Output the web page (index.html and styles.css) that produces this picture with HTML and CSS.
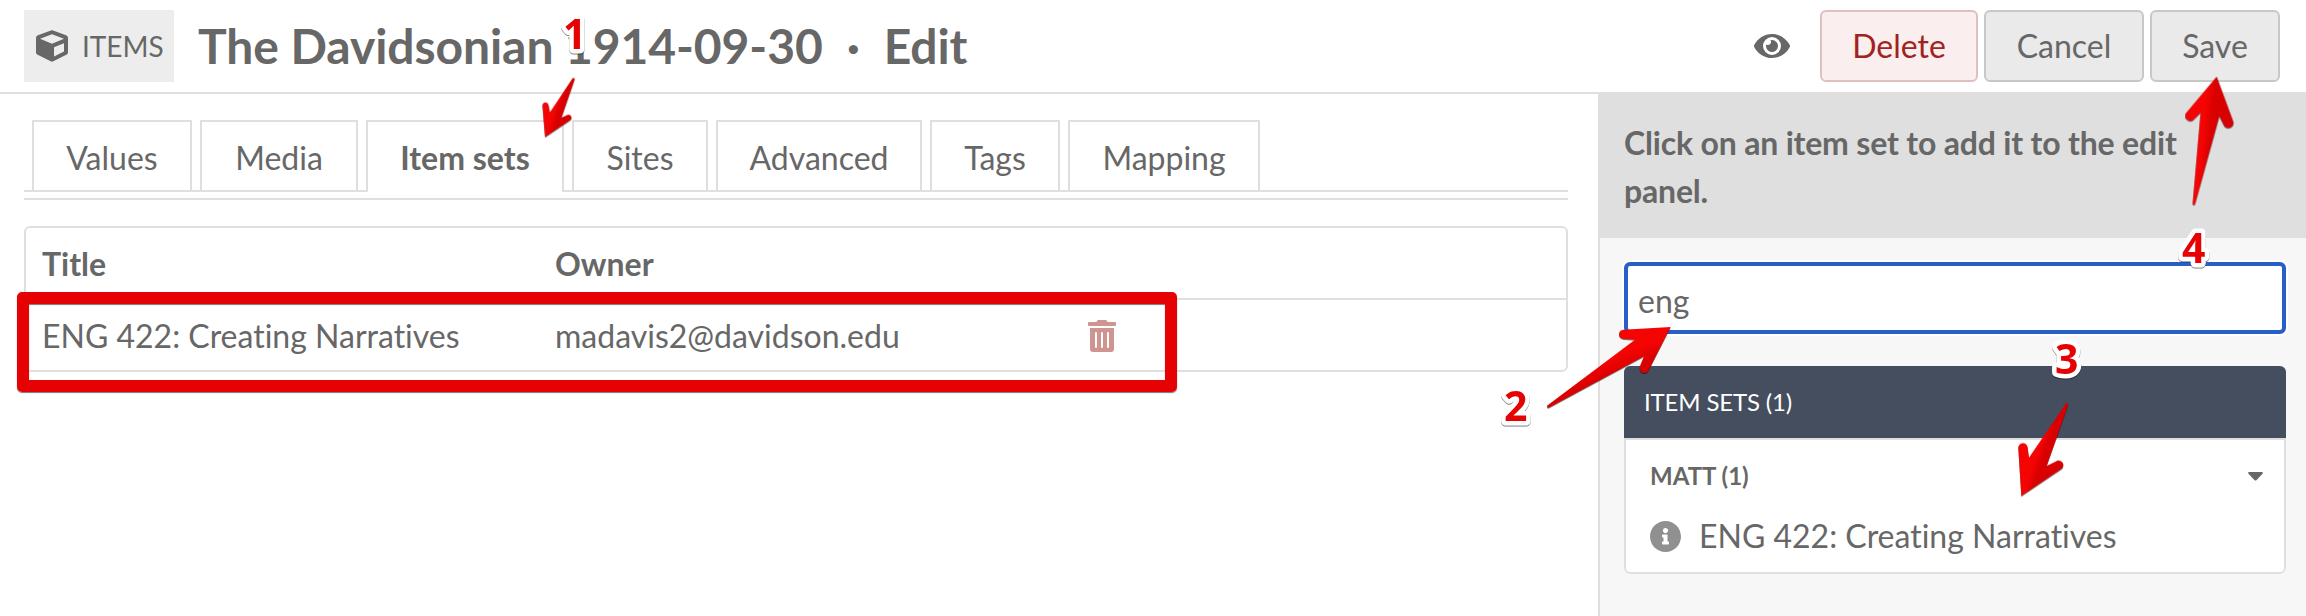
FILE: index.html
```html
<!DOCTYPE html>
<html lang="en">
<head>
<meta charset="utf-8">
<title>The Davidsonian 1914-09-30 · Edit</title>
<link rel="stylesheet" href="styles.css">
</head>
<body>
<header class="topbar">
  <div class="badge">
    <svg class="cube" viewBox="0 0 512 512"><path d="M239.1 6.3l-208 78c-18.7 7-31.1 25-31.1 45v225.1c0 18.2 10.3 34.8 26.5 42.9l208 104c13.5 6.8 29.4 6.8 42.9 0l208-104c16.3-8.1 26.5-24.8 26.5-42.9V129.3c0-20-12.4-37.9-31.1-44.9l-208-78C262 2.2 250 2.2 239.1 6.3zM256 68.4l192 72v1.1l-192 78-192-78v-1.1l192-72zm32 356V275.5l160-65v133.9l-160 80z"/></svg>
    <span>ITEMS</span>
  </div>
  <h1 class="title"><span>The Davidsonian 1914-09-30</span><span class="dot">·</span><span>Edit</span></h1>
  <div class="actions">
    <svg class="eye" viewBox="0 64 576 384"><path d="M572.52 241.4C518.29 135.59 410.93 64 288 64S57.68 135.64 3.48 241.41a32.35 32.35 0 0 0 0 29.19C57.71 376.41 165.07 448 288 448s230.32-71.64 284.52-177.41a32.35 32.35 0 0 0 0-29.19zM288 400a144 144 0 1 1 144-144 143.93 143.93 0 0 1-144 144zm0-240a95.31 95.31 0 0 0-25.31 3.79 47.85 47.85 0 0 1-66.9 66.9A95.78 95.78 0 1 0 288 160z"/></svg>
    <button class="btn delete">Delete</button>
    <button class="btn cancel">Cancel</button>
    <button class="btn save">Save</button>
  </div>
</header>
<div class="body">
  <main class="main">
    <nav class="tabs">
      <a class="tab">Values</a>
      <a class="tab">Media</a>
      <a class="tab active">Item sets</a>
      <a class="tab">Sites</a>
      <a class="tab">Advanced</a>
      <a class="tab">Tags</a>
      <a class="tab">Mapping</a>
    </nav>
    <div class="rule"></div>
    <div class="table">
      <div class="row head"><div>Title</div><div>Owner</div><div></div></div>
      <div class="row"><div>ENG 422: Creating Narratives</div><div>madavis2@davidson.edu</div><div class="trash-cell">
        <svg class="trash" viewBox="0 0 448 512"><path d="M32 464a48 48 0 0 0 48 48h288a48 48 0 0 0 48-48V128H32zm272-256a16 16 0 0 1 32 0v224a16 16 0 0 1-32 0zm-96 0a16 16 0 0 1 32 0v224a16 16 0 0 1-32 0zm-96 0a16 16 0 0 1 32 0v224a16 16 0 0 1-32 0zM432 32H312l-9.4-18.7A24 24 0 0 0 281.1 0H166.8a23.72 23.72 0 0 0-21.4 13.3L136 32H16A16 16 0 0 0 0 48v32a16 16 0 0 0 16 16h416a16 16 0 0 0 16-16V48a16 16 0 0 0-16-16z"/></svg></div></div>
    </div>
  </main>
  <aside class="sidebar">
    <h3 class="side-head">Click on an item set to add it to the edit panel.</h3>
    <div class="side-body">
      <input class="search" type="text" value="eng">
      <section class="panel">
        <div class="panel-head">ITEM SETS (1)</div>
        <div class="panel-list">
          <div class="group"><span>MATT (1)</span><svg class="caret" viewBox="0 0 15 9"><path d="M1.2 0H13.8Q15.6.4 14.3 2L8.4 8.2Q7.500 9 6.600 8.200L.7 2Q-.6.4 1.200 0z"/></svg></div>
          <div class="entry">
            <svg class="info" viewBox="8 8 496 496"><path d="M256 8C119.043 8 8 119.083 8 256c0 136.997 111.043 248 248 248s248-111.003 248-248C504 119.083 392.957 8 256 8zm0 110c23.196 0 42 18.804 42 42s-18.804 42-42 42-42-18.804-42-42 18.804-42 42-42zm56 254c0 6.627-5.373 12-12 12h-88c-6.627 0-12-5.373-12-12v-24c0-6.627 5.373-12 12-12h12v-64h-12c-6.627 0-12-5.373-12-12v-24c0-6.627 5.373-12 12-12h64c6.627 0 12 5.373 12 12v100h12c6.627 0 12 5.373 12 12v24z"/></svg>
            <span>ENG 422: Creating Narratives</span>
          </div>
        </div>
      </section>
    </div>
  </aside>
</div>

<!-- Step callouts drawn over the page -->
<div class="highlight"></div>
<svg class="callouts" viewBox="0 0 2306 616">
  <defs>
    <linearGradient id="ga" x1="0.3" y1="0.35" x2="0.7" y2="0.6"><stop offset="0.35" stop-color="#f50404"/><stop offset="0.65" stop-color="#d80000"/></linearGradient>
    <linearGradient id="gb" x1="0.35" y1="0" x2="0.75" y2="0.1"><stop offset="0.3" stop-color="#f50404"/><stop offset="0.7" stop-color="#d80000"/></linearGradient>
    <linearGradient id="gc" x1="0.55" y1="0.2" x2="0.8" y2="0.6"><stop offset="0.3" stop-color="#f50404"/><stop offset="0.7" stop-color="#d80000"/></linearGradient>
  </defs>
  <g class="arrows">
    <path fill="url(#ga)" transform="translate(500 0) scale(.37 .33333)" d="M122 411L115 318A8 9 0 0 1 131 315L135 337L196 235Q201 231 202 237L166 353L184 344A8 9 0 0 1 191 359z"/>
    <path fill="url(#gc)" transform="translate(1480 230) scale(.33333)" d="M572 291L430 299A14 14 0 0 0 432 327L465 329L201 527Q201 534 206 533L492 379L480 408A14 14 0 0 0 506 421z"/>
    <path fill="url(#ga)" transform="translate(1880 340) scale(.33333)" d="M424 468L415 325A14 14 0 0 1 443 322L447 353L559 189Q565 187 565 193L500 378L528 364A14 14 0 0 1 544 387z"/>
    <path fill="url(#gb)" transform="translate(1880 60) scale(.33333)" d="M1010 50L919 158A15 15 0 0 0 940 179L962 157L938 432Q941 437 945 432L1018 168L1031 194A15 15 0 0 0 1059 183z"/>
  </g>
  <g class="numbers">
    <text x="563" y="49">1</text>
    <text x="1504" y="421">2</text>
    <text x="2055" y="374">3</text>
    <text x="2182" y="263">4</text>
  </g>
</svg>
</body>
</html>
```
FILE: styles.css
```css
* { box-sizing: border-box; }

body {
  margin: 0;
  height: 616px;
  display: flex;
  flex-direction: column;
  overflow: hidden;
  background: #fff;
  color: #676767;
  font: 32px/48px Lato, sans-serif;
  font-variant-ligatures: none;
}

svg { display: block; fill: currentColor; }

.topbar {
  display: flex;
  align-items: center;
  height: 94px;
  padding: 0 26px 0 24px;
  border-bottom: 2px solid #dfdfdf;
}

.badge {
  display: flex;
  align-items: center;
  gap: 14px;
  width: 150px;
  height: 72px;
  padding-left: 12px;
  background: #ededed;
  font-size: 28px;
}

.cube { width: 32px; height: 32px; }

.title {
  display: flex;
  margin: 0 0 0 24px;
  font-size: 48px;
  font-weight: 700;
  letter-spacing: -0.08px;
  white-space: pre;
}

.dot { width: 61px; text-align: center; }

.actions {
  display: flex;
  align-items: center;
  gap: 6px;
  margin-left: auto;
}

.eye { width: 36px; height: 24px; margin-right: 24px; }

.btn {
  width: 160px;
  height: 72px;
  padding: 0;
  border: 2px solid #c8c8c8;
  border-radius: 6px;
  background: #eaeaea;
  color: #676767;
  font: inherit;
}

.delete { width: 158px; border-color: #dfc0c1; background: #fbeeee; color: #9f2321; }

.save { width: 130px; }

.body { display: flex; flex: 1; }

.main { width: 1598px; padding: 26px 30px 0 24px; }

.tabs {
  display: grid;
  grid-template-columns: 160px 158px 198px 136px 206px 130px 192px;
  gap: 8px;
  height: 72px;
  padding-left: 8px;
  border-bottom: 2px solid #dfdfdf;
}

.tab {
  height: 70px;
  padding-top: 12px;
  border: 2px solid #dfdfdf;
  border-bottom: 0;
  text-align: center;
}

.active {
  height: 72px;
  background: #fff;
  border-radius: 0 0 2px 2px;
  font-weight: 700;
}

.rule { margin-top: 6px; height: 2px; background: #dfdfdf; }

.table {
  margin-top: 26px;
  border: 2px solid #dfdfdf;
  border-radius: 6px;
}

.row {
  display: grid;
  grid-template-columns: 513px 533px 1fr;
  align-items: center;
  height: 70px;
  padding: 2px 0 0 16px;
}

.head { height: 72px; border-bottom: 2px solid #dfdfdf; font-weight: 700; }

.trash { width: 28px; height: 32px; color: #cf9390; }

.sidebar { flex: 1; border-left: 2px solid #dfdfdf; background: #f7f7f7; }

.side-head {
  height: 144px;
  margin: 0;
  padding: 25px 48px 0 24px;
  background: #dfdfdf;
  font-size: 32px;
  font-weight: 700;
  letter-spacing: -0.18px;
}

.side-body { padding: 24px 20px 0 24px; }

.search {
  display: block;
  width: 100%;
  height: 72px;
  padding: 4px 10px 0;
  border: 4px solid #275ec7;
  border-radius: 6px;
  outline: 0;
  background: #fff;
  box-shadow: 0 0 0 2px #fff;
  color: #676767;
  font: inherit;
}

.panel { margin-top: 32px; border-radius: 6px; overflow: hidden; }

.panel-head {
  height: 72px;
  padding: 12px 20px;
  background: #444e5e;
  color: #fff;
  font-size: 24px;
  letter-spacing: -0.15px;
}

.panel-list {
  height: 136px;
  border: 2px solid #dfdfdf;
  border-radius: 0 0 6px 6px;
  background: #fff;
}

.group {
  display: flex;
  align-items: center;
  justify-content: space-between;
  height: 72px;
  padding: 0 21px 0 24px;
  font-size: 24px;
  font-weight: 700;
}

.caret { width: 15px; height: 9px; }

.entry {
  display: flex;
  align-items: center;
  gap: 18px;
  height: 48px;
  padding-left: 24px;
}

.info { width: 31px; height: 31px; color: #909090; }

.highlight {
  position: absolute;
  left: 17px;
  top: 292px;
  width: 1160px;
  height: 100px;
  border: 12px solid #e60202;
  border-radius: 5px;
  box-shadow: 0 1px 1px #777, inset 0 1px 1px #777;
}

.callouts { position: absolute; left: 0; top: 0; width: 2306px; height: 616px; }

.arrows { filter: drop-shadow(0 1px 0.5px rgba(0, 0, 0, 0.5)); }

.numbers {
  fill: #e60202;
  stroke: #fff;
  stroke-width: 9px;
  stroke-linejoin: round;
  paint-order: stroke;
  font: 700 41px "Open Sans", sans-serif;
  filter: drop-shadow(0 1px 0.5px rgba(0, 0, 0, 0.5));
}
```
